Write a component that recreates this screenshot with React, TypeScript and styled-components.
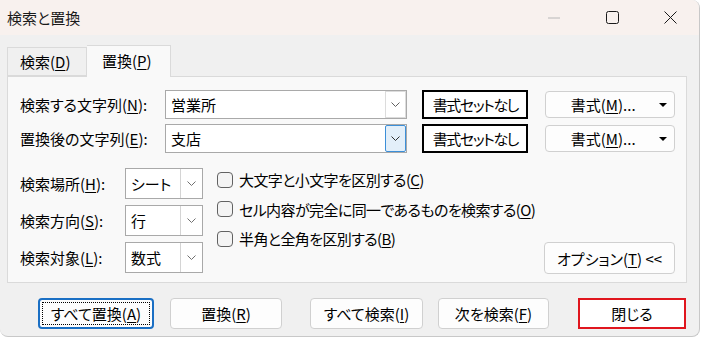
import styled, { createGlobalStyle } from "styled-components";

const GlobalStyle = createGlobalStyle`
  html, body {
    margin: 0;
    padding: 0;
    background: #ffffff;
  }
  body {
    font-family: "Noto Sans CJK JP", "Noto Sans", sans-serif;
    font-size: 15px;
    color: #000;
    font-feature-settings: "palt";
  }
  u {
    text-underline-offset: 2px;
  }
`;

const Window = styled.div`
  width: 700px;
  height: 337px;
  box-sizing: border-box;
  background: #f0f0f0;
  border-right: 1px solid #c8c8c8;
  border-bottom: 1px solid #c8c8c8;
  border-radius: 0 8px 8px 8px;
  overflow: hidden;
  display: flex;
  flex-direction: column;
`;

const TitleBar = styled.div`
  height: 35px;
  flex-shrink: 0;
  background: #f8f1ee;
  display: flex;
  align-items: center;
  padding-left: 7px;
  line-height: 1;
`;

const Title = styled.span`
  font-size: 15px;
  color: #1a1a1a;
`;

const Controls = styled.div`
  margin-left: auto;
  display: flex;
  height: 100%;
`;

const ControlButton = styled.div`
  width: 58px;
  height: 100%;
  display: flex;
  align-items: center;
  justify-content: center;
`;

const TabStrip = styled.div`
  display: flex;
  align-items: flex-end;
  padding: 10px 0 0 7px;
  height: 31px;
  flex-shrink: 0;
`;

const Tab = styled.div<{ $active?: boolean }>`
  box-sizing: border-box;
  width: ${(p) => (p.$active ? "84px" : "80px")};
  height: ${(p) => (p.$active ? "32px" : "29px")};
  margin-bottom: ${(p) => (p.$active ? "-1px" : "0")};
  background: ${(p) => (p.$active ? "#f9f9f9" : "#f0f0f0")};
  border: 1px solid #dadada;
  border-bottom: ${(p) => (p.$active ? "none" : "1px solid #dadada")};
  border-left: ${(p) => (p.$active ? "none" : "1px solid #dadada")};
  position: relative;
  z-index: ${(p) => (p.$active ? 2 : 1)};
  display: flex;
  align-items: center;
  padding-left: ${(p) => (p.$active ? "15px" : "12px")};
  padding-bottom: ${(p) => (p.$active ? "2px" : "0")};
`;

const Panel = styled.div`
  box-sizing: border-box;
  margin: 0 12px 0 7px;
  height: 207px;
  flex-shrink: 0;
  background: #f9f9f9;
  border: 1px solid #dadada;
  padding: 13px 11px 0 12px;
  position: relative;
  z-index: 1;
`;

const Row = styled.div<{ $top?: number }>`
  display: flex;
  align-items: center;
  height: 29px;
  margin-top: ${(p) => p.$top ?? 0}px;
`;

const Label = styled.div<{ $w: number }>`
  width: ${(p) => p.$w}px;
  flex-shrink: 0;
  white-space: nowrap;
`;

const Combo = styled.div<{ $w: number; $h: number }>`
  box-sizing: border-box;
  width: ${(p) => p.$w}px;
  height: ${(p) => p.$h}px;
  border: 1px solid #a9a9a9;
  background: #fff;
  display: flex;
  align-items: stretch;
`;

const ComboText = styled.div`
  flex: 1;
  display: flex;
  align-items: center;
  padding-left: 5px;
  white-space: nowrap;
`;

const EditArrow = styled.div<{ $active?: boolean }>`
  box-sizing: border-box;
  width: 21px;
  border: 1px solid ${(p) => (p.$active ? "#3c8fd8" : "#dcdcdc")};
  background: ${(p) => (p.$active ? "#e3eff9" : "#fff")};
  border-radius: ${(p) => (p.$active ? "2px" : "0")};
  display: flex;
  align-items: center;
  justify-content: center;
`;

const SelectArrow = styled.div`
  width: 21px;
  border-left: 1px solid #d4d4d4;
  display: flex;
  align-items: center;
  justify-content: center;
`;

const PlainButton = styled.div<{ $w: number; $ml: number }>`
  box-sizing: border-box;
  width: ${(p) => p.$w}px;
  height: 29px;
  margin-left: ${(p) => p.$ml}px;
  border: 2px solid #000;
  background: #fff;
  display: flex;
  align-items: center;
  justify-content: center;
  white-space: nowrap;
  letter-spacing: -1.4px;
`;

const Button = styled.div<{ $w: number; $h: number; $ml?: number }>`
  box-sizing: border-box;
  width: ${(p) => p.$w}px;
  height: ${(p) => p.$h}px;
  margin-left: ${(p) => p.$ml ?? 0}px;
  border: 1px solid #d0d0d0;
  border-radius: 4px;
  background: #fdfdfd;
  display: flex;
  align-items: center;
  justify-content: center;
  white-space: nowrap;
  position: relative;
`;

const FocusButton = styled(Button)`
  border: 2px solid #1a6fc4;
  outline: 1px dotted #000;
  outline-offset: -5px;
`;

const CloseButton = styled(Button)`
  border: 2px solid #e0161e;
  border-radius: 0;
  background: #fff;
`;

const MenuLabel = styled.span`
  margin-right: 14px;
`;

const MenuCaret = styled.span`
  position: absolute;
  right: 7px;
  top: 50%;
  margin-top: -2px;
  width: 0;
  height: 0;
  border-left: 4px solid transparent;
  border-right: 4px solid transparent;
  border-top: 4px solid #000;
`;

const Lower = styled.div`
  display: flex;
  margin-top: 15px;
`;

const SelectColumn = styled.div`
  display: flex;
  flex-direction: column;
  gap: 6px;
`;

const SelectRow = styled.div`
  display: flex;
  align-items: center;
  height: 31px;
`;

const CheckColumn = styled.div`
  display: flex;
  flex-direction: column;
  margin: -3px 0 0 14px;
`;

const CheckRow = styled.div`
  display: flex;
  align-items: center;
  height: 29.5px;
  white-space: nowrap;
  letter-spacing: -0.6px;
`;

const Box = styled.span`
  box-sizing: border-box;
  width: 16px;
  height: 16px;
  border: 1px solid #626262;
  border-radius: 4px;
  background: #f4f4f4;
  margin-right: 6px;
  flex-shrink: 0;
`;

const OptionButton = styled(Button)`
  margin-left: auto;
  align-self: flex-end;
  margin-bottom: -1px;
`;

const ButtonBar = styled.div`
  display: flex;
  padding: 15px 0 0 38px;
`;

const Chevron = ({ color = "#606060" }: { color?: string }) => (
  <svg width="9" height="5" viewBox="0 0 9 5">
    <path d="M0.5 0.5 L4.5 4.5 L8.5 0.5" fill="none" stroke={color} strokeWidth="1" />
  </svg>
);

const Select = ({ value }: { value: string }) => (
  <Combo $w={78} $h={31}>
    <ComboText>{value}</ComboText>
    <SelectArrow>
      <Chevron color="#707070" />
    </SelectArrow>
  </Combo>
);

export default function App() {
  return (
    <>
      <GlobalStyle />
      <Window>
        <TitleBar>
          <Title>検索と置換</Title>
          <Controls>
            <ControlButton>
              <svg width="12" height="2" viewBox="0 0 12 2">
                <path d="M0 1 H12" stroke="#b8b8b8" strokeWidth="1" />
              </svg>
            </ControlButton>
            <ControlButton>
              <svg width="13" height="13" viewBox="0 0 13 13">
                <rect x="0.5" y="0.5" width="12" height="12" rx="2" fill="none" stroke="#1a1a1a" strokeWidth="1" />
              </svg>
            </ControlButton>
            <ControlButton>
              <svg width="13" height="13" viewBox="0 0 13 13">
                <path d="M0.5 0.5 L12.5 12.5 M12.5 0.5 L0.5 12.5" stroke="#1a1a1a" strokeWidth="1" />
              </svg>
            </ControlButton>
          </Controls>
        </TitleBar>

        <TabStrip>
          <Tab>
            検索(<u>D</u>)
          </Tab>
          <Tab $active>
            置換(<u>P</u>)
          </Tab>
        </TabStrip>

        <Panel>
          <Row>
            <Label $w={145}>
              検索する文字列(<u>N</u>):
            </Label>
            <Combo $w={243} $h={29}>
              <ComboText>営業所</ComboText>
              <EditArrow>
                <Chevron />
              </EditArrow>
            </Combo>
            <PlainButton $w={106} $ml={15}>
              書式セットなし
            </PlainButton>
            <Button $w={130} $h={27} $ml={17}>
              <MenuLabel>
                書式(<u>M</u>)...
              </MenuLabel>
              <MenuCaret />
            </Button>
          </Row>
          <Row $top={5}>
            <Label $w={145}>
              置換後の文字列(<u>E</u>):
            </Label>
            <Combo $w={243} $h={29}>
              <ComboText>支店</ComboText>
              <EditArrow $active>
                <Chevron color="#303030" />
              </EditArrow>
            </Combo>
            <PlainButton $w={106} $ml={15}>
              書式セットなし
            </PlainButton>
            <Button $w={130} $h={27} $ml={17}>
              <MenuLabel>
                書式(<u>M</u>)...
              </MenuLabel>
              <MenuCaret />
            </Button>
          </Row>

          <Lower>
            <SelectColumn>
              <SelectRow>
                <Label $w={105}>
                  検索場所(<u>H</u>):
                </Label>
                <Select value="シート" />
              </SelectRow>
              <SelectRow>
                <Label $w={105}>
                  検索方向(<u>S</u>):
                </Label>
                <Select value="行" />
              </SelectRow>
              <SelectRow>
                <Label $w={105}>
                  検索対象(<u>L</u>):
                </Label>
                <Select value="数式" />
              </SelectRow>
            </SelectColumn>

            <CheckColumn>
              <CheckRow>
                <Box />
                大文字と小文字を区別する(<u>C</u>)
              </CheckRow>
              <CheckRow>
                <Box />
                セル内容が完全に同一であるものを検索する(<u>O</u>)
              </CheckRow>
              <CheckRow>
                <Box />
                半角と全角を区別する(<u>B</u>)
              </CheckRow>
            </CheckColumn>

            <OptionButton $w={131} $h={32}>
              オプション(<u>T</u>) &lt;&lt;
            </OptionButton>
          </Lower>
        </Panel>

        <ButtonBar>
          <FocusButton $w={116} $h={31}>
            すべて置換(<u>A</u>)
          </FocusButton>
          <Button $w={112} $h={31} $ml={16}>
            置換(<u>R</u>)
          </Button>
          <Button $w={113} $h={31} $ml={28}>
            すべて検索(<u>I</u>)
          </Button>
          <Button $w={111} $h={31} $ml={15}>
            次を検索(<u>F</u>)
          </Button>
          <CloseButton $w={108} $h={31} $ml={29}>
            閉じる
          </CloseButton>
        </ButtonBar>
      </Window>
    </>
  );
}
